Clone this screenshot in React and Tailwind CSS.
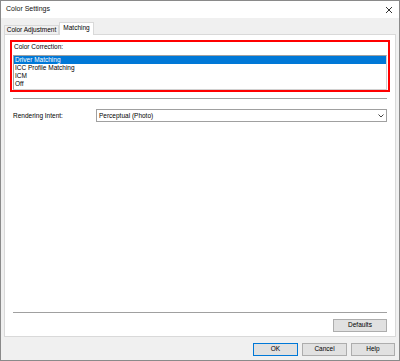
export default function App() {
  const rows = ["Driver Matching", "ICC Profile Matching", "ICM", "Off"];
  return (
    <div
      className="w-[400px] h-[361px] border border-[#8a8a8a] bg-[#f0f0f0] flex flex-col text-[6.5px] text-black"
      style={{ fontFamily: '"Liberation Sans", Arial, sans-serif' }}
    >
      {/* title bar */}
      <div className="h-[17px] bg-white flex items-center justify-between pl-[5px] pr-[5px]">
        <span className="text-[7px] text-[#111]">Color Settings</span>
        <svg width="8" height="8" viewBox="0 0 8 8" className="mr-[1px] mt-[1px]">
          <path d="M1 1L7 7M7 1L1 7" stroke="#333" strokeWidth="1" />
        </svg>
      </div>

      {/* tabs */}
      <div className="h-[16px] flex items-end pl-[3px]">
        <div className="h-[9px] w-[55px] border border-b-0 border-[#d9d9d9] bg-[#f0f0f0] flex items-center justify-center leading-none">
          Color Adjustment
        </div>
        <div className="h-[13px] w-[35px] border border-b-0 border-[#d9d9d9] bg-white flex items-center justify-center leading-none -mb-px relative z-10 pb-[2px]">
          Matching
        </div>
      </div>

      {/* panel */}
      <div className="mx-[3px] h-[303px] border border-[#d9d9d9] bg-white flex flex-col px-[5px] pt-[5px] pb-[4px]">
        <div className="h-[52px] border-2 border-[#ff0000] flex flex-col px-[1px] pt-[2px]">
          <div className="leading-none h-[9px] pl-[1px]">Color Correction:</div>
          <div className="mt-[2px] h-[36px] border border-[#a0a0a0] border-r-[#d0d0d0] border-b-[#d0d0d0] flex flex-col">
            {rows.map((r, i) => (
              <div
                key={r}
                className={`h-[8px] leading-[8px] pl-[1px] ${i === 0 ? "bg-[#0078d7] text-white" : ""}`}
              >
                {r}
              </div>
            ))}
          </div>
        </div>

        <div className="mt-[6px] mx-[3px] h-[2px] border-t border-[#a0a0a0] border-b border-b-white" />

        <div className="mt-[9px] mx-[3px] flex items-center h-[13px]">
          <div className="w-[83px]">Rendering Intent:</div>
          <div className="flex-1 h-[13px] border border-[#a0a0a0] flex items-center justify-between pl-[2px] pr-[2px]">
            <span>Perceptual (Photo)</span>
            <svg width="6" height="4" viewBox="0 0 6 4">
              <path d="M0.5 0.5L3 3L5.5 0.5" stroke="#444" strokeWidth="1" fill="none" />
            </svg>
          </div>
        </div>

        <div className="flex-1" />

        <div className="mx-[3px] h-[2px] border-t border-[#a0a0a0] border-b border-b-white" />
        <div className="flex justify-end mx-[3px] mt-[5px]">
          <button className="w-[54px] h-[13px] border border-[#adadad] bg-[#e1e1e1] leading-none">
            Defaults
          </button>
        </div>
      </div>

      {/* footer */}
      <div className="flex justify-end gap-[4px] pr-[4px] pt-[6px]">
        <button className="w-[45px] h-[13px] border border-[#0078d7] bg-[#e1e1e1] leading-none">OK</button>
        <button className="w-[45px] h-[13px] border border-[#adadad] bg-[#e1e1e1] leading-none">Cancel</button>
        <button className="w-[44px] h-[13px] border border-[#adadad] bg-[#e1e1e1] leading-none">Help</button>
      </div>
    </div>
  );
}
